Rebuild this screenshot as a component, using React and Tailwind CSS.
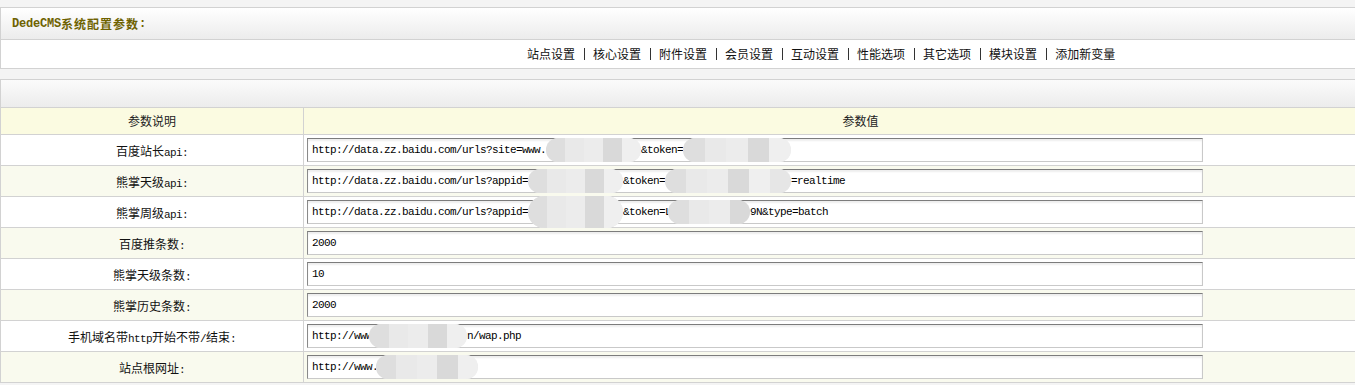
import React from "react";

const MONO = "font-['Liberation_Mono',monospace] text-[11px] tracking-[-0.6px]";
const CJK = "font-['Noto_Sans_CJK_SC','Noto_Sans',sans-serif] text-[12px]";

function Mixed({ text, bold = false }) {
  const parts = text.match(/[\x00-\x7F]+|[^\x00-\x7F]+/g) || [];
  return (
    <>
      {parts.map((p, i) =>
        /^[\x00-\x7F]+$/.test(p) ? (
          <span
            key={i}
            className={`${
              bold
                ? "font-['Liberation_Mono',monospace] text-[12px] font-bold tracking-[-0.2px]"
                : MONO
            } whitespace-pre`}
          >
            {p}
          </span>
        ) : (
          <span key={i} className={`${CJK} ${bold ? "font-bold tracking-[1px]" : ""}`}>
            {p}
          </span>
        )
      )}
    </>
  );
}

const SHADES = [
  "bg-[#ececec]",
  "bg-[#dedede]",
  "bg-[#e6e6e6]",
  "bg-[#d9d9d9]",
  "bg-[#e9e9e9]",
  "bg-[#dcdcdc]",
  "bg-[#efefef]",
];

function Blob({ w, ml = 0, tall = false }) {
  const n = Math.max(3, Math.round(w / 20));
  return (
    <div
      className={`relative shrink-0 rounded-full overflow-hidden flex bg-[#ebebeb] ${
        tall ? "h-[32px]" : "h-[24px]"
      }`}
      style={{ width: w, marginLeft: ml }}
    >
      {Array.from({ length: n }).map((_, i) => (
        <div key={i} className={`flex-1 ${SHADES[(i * 3 + 1) % SHADES.length]}`} />
      ))}
    </div>
  );
}

const rows = [
  {
    label: "百度站长api:",
    segs: [
      { t: "http://data.zz.baidu.com/urls?site=www." },
      { b: 95 },
      { t: "&token=" },
      { b: 108 },
    ],
  },
  {
    label: "熊掌天级api:",
    segs: [
      { t: "http://data.zz.baidu.com/urls?appid=" },
      { b: 95 },
      { t: "&token=" },
      { b: 126 },
      { t: "=realtime" },
    ],
  },
  {
    label: "熊掌周级api:",
    segs: [
      { t: "http://data.zz.baidu.com/urls?appid=" },
      { b: 95, tall: true },
      { t: "&token=L" },
      { b: 82, ml: -3 },
      { t: "9N&type=batch" },
    ],
  },
  { label: "百度推条数:", segs: [{ t: "2000" }] },
  { label: "熊掌天级条数:", segs: [{ t: "10" }] },
  { label: "熊掌历史条数:", segs: [{ t: "2000" }] },
  {
    label: "手机域名带http开始不带/结束:",
    segs: [{ t: "http://www" }, { b: 98, ml: -3 }, { t: "n/wap.php" }],
  },
  {
    label: "站点根网址:",
    segs: [{ t: "http://www." }, { b: 102, ml: -2 }],
  },
];

const navItems = [
  "站点设置",
  "核心设置",
  "附件设置",
  "会员设置",
  "互动设置",
  "性能选项",
  "其它选项",
  "模块设置",
  "添加新变量",
];

export default function App() {
  return (
    <div className="w-full h-[385px] overflow-hidden bg-[#f4f4f4] pt-[7px]">
      {/* Box 1 */}
      <div className="w-[1417px] border-t border-b border-l border-[#d2d2d2] bg-white">
        <div className="h-[32px] flex items-center pl-[11px] bg-gradient-to-b from-[#ffffff] to-[#ececec] border-b border-[#d2d2d2] text-[#6e6200]">
          <Mixed text="DedeCMS系统配置参数:" bold />
        </div>
        <div className="h-[28px] flex items-center pl-[526px] text-[#111] bg-white">
          {navItems.map((n, i) => (
            <React.Fragment key={n}>
              {i > 0 && (
                <span className="w-[18px] flex justify-center">
                  <span className="block w-px h-[12px] bg-[#333]" />
                </span>
              )}
              <span className={`${CJK} leading-none`}>{n}</span>
            </React.Fragment>
          ))}
        </div>
      </div>

      {/* Box 2 */}
      <div className="mt-[10px] w-[1417px] border-t border-l border-[#d2d2d2] bg-white">
        <div className="h-[28px] bg-gradient-to-b from-[#fbfbfb] to-[#ececec] border-b border-[#d2d2d2]" />
        <div className="grid grid-cols-[302px_1fr] h-[27px] bg-[#fbfbe1] border-b border-[#d2d2d2] text-[#222]">
          <div className="flex items-center justify-center">
            <span className={CJK}>参数说明</span>
          </div>
          <div className="flex items-center justify-center border-l border-[#d2d2d2]">
            <span className={CJK}>参数值</span>
          </div>
        </div>
        {rows.map((r, idx) => (
          <div
            key={idx}
            className={`grid grid-cols-[302px_1fr] h-[31px] border-b border-[#d2d2d2] text-[#111] ${
              idx % 2 === 1 ? "bg-[#f9faee]" : "bg-white"
            }`}
          >
            <div className="flex items-center justify-center">
              <span>
                <Mixed text={r.label} />
              </span>
            </div>
            <div className="flex items-center border-l border-[#d2d2d2] pl-[3px]">
              <div className="w-[896px] h-[24px] flex items-center pl-[4px] bg-white border border-t-[#7c7c7c] border-l-[#8a8a8a] border-r-[#c9c9c9] border-b-[#c9c9c9] shadow-[inset_0_2px_2px_rgba(0,0,0,0.07)] text-black">
                {r.segs.map((s, i) =>
                  s.t !== undefined ? (
                    <span key={i} className={`${MONO} whitespace-pre leading-none`}>
                      {s.t}
                    </span>
                  ) : (
                    <Blob key={i} w={s.b} ml={s.ml || 0} tall={s.tall} />
                  )
                )}
              </div>
            </div>
          </div>
        ))}
      </div>
    </div>
  );
}
